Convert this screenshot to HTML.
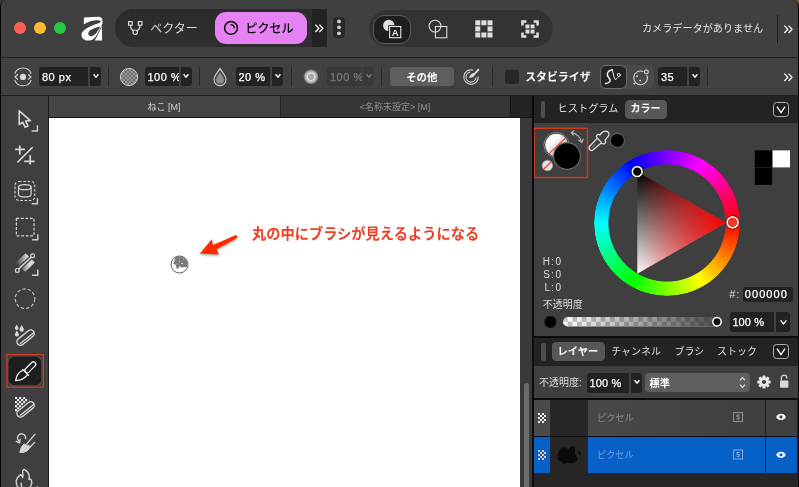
<!DOCTYPE html>
<html lang="ja">
<head>
<meta charset="utf-8">
<title>Affinity</title>
<style>
*{box-sizing:border-box;margin:0;padding:0}
html,body{width:799px;height:487px;overflow:hidden;background:linear-gradient(90deg,#43362a,#6e5a40)}
body{font-family:"Liberation Sans","Noto Sans CJK JP",sans-serif;color:#e4e4e4;font-size:11px;line-height:1}
#win{will-change:transform;position:absolute;left:0;top:0;width:799px;height:487px;background:#404040;border-radius:6px 6px 0 0;overflow:hidden}
.abs{position:absolute}
.t{position:absolute;white-space:nowrap;line-height:1}
.b{font-weight:bold}
.num{font-size:11px;letter-spacing:0.5px;-webkit-text-stroke:0.25px currentColor}
/* title bar */
#title{position:absolute;left:0;top:0;width:799px;height:57px;background:#404040}
.tl{position:absolute;top:22px;width:12px;height:12px;border-radius:50%}
#hl1{position:absolute;left:0;top:56.5px;width:799px;height:1.5px;background:#1f1f1f}
#ctx{position:absolute;left:0;top:58px;width:799px;height:37px;background:#414141}
#hl2{position:absolute;left:0;top:94.5px;width:799px;height:1.5px;background:#1f1f1f}
.fld{overflow:hidden;position:absolute;top:67px;height:19px;background:#222;border-radius:3px 0 0 3px;color:#fff;font-size:11px;letter-spacing:0.5px;-webkit-text-stroke:0.25px currentColor}
.fld span{position:absolute;left:3px;top:4.6px;white-space:nowrap}
.dd{position:absolute;top:67px;height:19px;width:11px;background:#222;border-radius:0 3px 3px 0}
.vsep{position:absolute;top:67px;height:19px;width:1px;background:#2a2a2a}
/* left tools */
#tools{position:absolute;left:0;top:96px;width:48px;height:391px;background:#3f3f3f}
#tabs{position:absolute;left:49px;top:96px;width:484px;height:22px;background:#232323}
#canvas{position:absolute;left:49px;top:117.9px;width:471.2px;height:370px;background:#fff}
#scroll{position:absolute;left:520.2px;top:118px;width:12px;height:369px;background:#393939}
#rp{position:absolute;left:532.1px;top:96px;width:267px;height:391px;background:#0c0c0c}
</style>
</head>
<body>
<div id="win">
<div id="title">
  <div class="tl" style="left:14px;background:#fe5f57"></div>
  <div class="tl" style="left:34px;background:#febc2e"></div>
  <div class="tl" style="left:54px;background:#28c840"></div>
  <svg class="abs" style="left:81px;top:15.5px" width="22" height="25" viewBox="120 114 238 266">
    <path fill="#fff" d="M152,128 L305,121 C345,120 360,150 350,195 L336,172 C310,146 225,158 150,203 Z"/>
    <path fill="#fff" d="M352,185 C342,240 300,330 250,362 C210,390 140,382 127,330 C115,285 170,250 225,224 C275,200 320,190 340,172 Z"/>
    <path fill="#404040" d="M329,225 C298,292 256,334 224,331 C190,326 192,290 220,267 C253,242 300,232 329,225 Z"/>
    <path fill="#fff" d="M347,212 L348,376 L268,376 Z"/>
    <path stroke="#404040" stroke-width="9" d="M340,232 L272,362" fill="none"/>
  </svg>
  <div class="abs" style="left:115px;top:9px;width:212px;height:38px;background:#232323;border-radius:19px 0 0 19px"></div>
  <div class="abs" style="left:115px;top:9px;width:197px;height:38px;background:linear-gradient(#2b2b2b,#2f2f2f);border-radius:19px 0 0 19px"></div>
  <svg class="abs" style="left:126px;top:19px" width="18" height="18" viewBox="0 0 18 18" fill="none" stroke="#d8d8d8" stroke-width="1.2">
    <rect x="2.6" y="2.6" width="3.6" height="3.6"/><rect x="12.3" y="2.6" width="3.6" height="3.6"/>
    <circle cx="9.2" cy="13.2" r="2.2"/>
    <path d="M4.4,6.2 C4.4,9.5 6,11 7.4,12 M14.1,6.2 C14.1,9.5 12.4,11 11,12"/>
  </svg>
  <div class="t" style="left:150.3px;top:23px;font-size:12px;color:#dcdcdc">ベクター</div>
  <div class="abs" style="left:215.2px;top:12.3px;width:91.8px;height:31.4px;background:#e682f4;border-radius:11px"></div>
  <svg class="abs" style="left:222px;top:19px" width="18" height="18" viewBox="0 0 18 18" fill="none" stroke="#111" stroke-width="1.5">
    <circle cx="9" cy="8.9" r="6.4"/>
    <path d="M8.4,5.6 C10.8,5.4 12.3,6.8 12.3,9.2" stroke-width="1.4"/>
  </svg>
  <div class="t" style="left:245.6px;top:22.9px;font-size:12px;color:#000;font-weight:500">ピクセル</div>
  <svg class="abs" style="left:314px;top:22.5px" width="11" height="11" viewBox="0 0 11 11" fill="none" stroke="#f4f4f4" stroke-width="1.35"><path d="M1.4,1.6 L4.8,5.3 L1.4,9 M5.4,1.6 L8.8,5.3 L5.4,9"/></svg>
  <div class="abs" style="left:333px;top:16.5px;width:12px;height:21.6px;background:#282828;border-radius:4px"></div>
  <svg class="abs" style="left:333px;top:16.1px" width="12" height="22" viewBox="0 0 12 22" fill="#d0d0d0"><circle cx="6" cy="5.4" r="1.9"/><circle cx="6" cy="11.3" r="1.9"/><circle cx="6" cy="17.3" r="1.9"/></svg>
  <div class="abs" style="left:369px;top:10px;width:184px;height:37px;background:#333;border-radius:18.5px"></div>
  <div class="abs" style="left:373px;top:14.5px;width:38px;height:29px;background:#1e1e1e;border:1px solid #5c5c5c;border-radius:11px"></div>
  <svg class="abs" style="left:380px;top:16px" width="26" height="26" viewBox="0 0 26 26">
    <circle cx="8.8" cy="9.5" r="5.7" fill="#dedede"/>
    <rect x="8.2" y="9.2" width="14" height="14" fill="#1e1e1e"/>
    <rect x="9.6" y="10.5" width="11.2" height="11.2" fill="#1e1e1e" stroke="#e4e4e4" stroke-width="1.1"/>
    <text x="15.2" y="20" font-family="Liberation Sans, sans-serif" font-weight="bold" font-size="9.5" fill="#e4e4e4" text-anchor="middle">A</text>
  </svg>
  <svg class="abs" style="left:425px;top:16px" width="26" height="26" viewBox="0 0 26 26" fill="none" stroke="#dcdcdc" stroke-width="1.1">
    <circle cx="10" cy="10.1" r="5.9"/><rect x="10.4" y="10.5" width="11.4" height="11.3"/>
  </svg>
  <svg class="abs" style="left:474.5px;top:19.8px" width="18" height="18" viewBox="0 0 18 18" fill="#dedede">
    <rect x="0.3" y="0.3" width="5" height="5"/><rect x="6.4" y="0.3" width="5" height="5"/><rect x="12.5" y="0.3" width="5" height="5"/>
    <rect x="0.3" y="6.4" width="5" height="5"/><rect x="12.5" y="6.4" width="5" height="5"/>
    <rect x="0.3" y="12.5" width="5" height="5"/><rect x="6.4" y="12.5" width="5" height="5"/><rect x="12.5" y="12.5" width="5" height="5"/>
  </svg>
  <svg class="abs" style="left:520.5px;top:19.8px" width="18" height="18" viewBox="0 0 18 18" fill="#dedede">
    <path d="M0.2,0.2 h5.2 v2.5 h-2.7 v2.7 h-2.5z M17.8,0.2 h-5.2 v2.5 h2.7 v2.7 h2.5z M0.2,17.8 h5.2 v-2.5 h-2.7 v-2.7 h-2.5z M17.8,17.8 h-5.2 v-2.5 h2.7 v-2.7 h2.5z"/>
    <rect x="4.5" y="4.5" width="3.9" height="3.9"/><rect x="9.6" y="4.5" width="3.9" height="3.9"/><rect x="4.5" y="9.6" width="3.9" height="3.9"/><rect x="9.6" y="9.6" width="3.9" height="3.9"/>
  </svg>
  <div class="t" style="left:642px;top:24px;font-size:10.15px;color:#e6e6e6">カメラデータがありません</div>
  <div class="abs" style="left:777px;top:15px;width:1px;height:28px;background:#1e1e1e"></div>
  <svg class="abs" style="left:783px;top:23.5px" width="11" height="11" viewBox="0 0 11 11" fill="none" stroke="#f4f4f4" stroke-width="1.35"><path d="M1.4,1.6 L4.8,5.3 L1.4,9 M5.6,1.6 L9,5.3 L5.6,9"/></svg>
</div>
<div id="hl1"></div>
<div id="ctx"></div>

  <svg class="abs" style="left:12px;top:66px" width="22" height="22" viewBox="0 0 22 22" fill="none" stroke="#d4d4d4" stroke-width="1.1">
    <path d="M2.7,7.9 A8.8,8.8 0 0 1 19.3,7.9 M2.7,13.9 A8.8,8.8 0 0 0 19.3,13.9"/>
    <path d="M5.9,8.2 L3.1,10.9 L5.9,13.7 M16.1,8.2 L18.9,10.9 L16.1,13.7" stroke-width="1.2"/>
    <circle cx="11" cy="10.9" r="3.1" fill="#d8d8d8" stroke="none"/>
  </svg>
<div class="fld" style="left:39px;width:49px"><span>80 px</span></div><div class="dd" style="left:90px"><svg class="abs" style="left:2.5px;top:6px" width="6" height="6" viewBox="0 0 6 6" fill="none" stroke="#fff" stroke-width="1.4"><path d="M0.6,1.2 L3,4.2 L5.4,1.2"/></svg></div>
  <div class="vsep" style="left:108px"></div>
  <svg class="abs" style="left:119px;top:67px" width="20" height="20" viewBox="0 0 20 20">
    <defs><pattern id="ck" width="4" height="4" patternUnits="userSpaceOnUse"><rect width="4" height="4" fill="#6a6a6a"/><rect width="2" height="2" fill="#9a9a9a"/><rect x="2" y="2" width="2" height="2" fill="#9a9a9a"/></pattern></defs>
    <circle cx="10" cy="10" r="8.6" fill="url(#ck)" stroke="#cfcfcf" stroke-width="1"/>
  </svg>
<div class="fld" style="left:144.5px;width:34.5px"><span>100 %</span></div><div class="dd" style="left:180.5px"><svg class="abs" style="left:2.5px;top:6px" width="6" height="6" viewBox="0 0 6 6" fill="none" stroke="#fff" stroke-width="1.4"><path d="M0.6,1.2 L3,4.2 L5.4,1.2"/></svg></div>
  <div class="vsep" style="left:199px"></div>
  <svg class="abs" style="left:212px;top:67px" width="16" height="20" viewBox="0 0 16 20">
    <path d="M8,1.6 C10.5,5.6 14,9 14,12.6 A6,6 0 0 1 2,12.6 C2,9 5.5,5.6 8,1.6 Z" fill="none" stroke="#d4d4d4" stroke-width="1.1"/>
    <path d="M8,5.2 C9.8,8 12,10.4 12,12.8 A4,4 0 0 1 4,12.8 C4,10.4 6.2,8 8,5.2 Z" fill="#8c8c8c"/>
  </svg>
<div class="fld" style="left:235.5px;width:34.5px"><span>20 %</span></div><div class="dd" style="left:272px"><svg class="abs" style="left:2.5px;top:6px" width="6" height="6" viewBox="0 0 6 6" fill="none" stroke="#fff" stroke-width="1.4"><path d="M0.6,1.2 L3,4.2 L5.4,1.2"/></svg></div>
  <div class="vsep" style="left:290.5px"></div>
  <svg class="abs" style="left:302px;top:68px" width="18" height="18" viewBox="0 0 18 18">
    <defs><radialGradient id="hg"><stop offset="0.36" stop-color="#a6a6a6"/><stop offset="0.44" stop-color="#e8e8e8"/><stop offset="0.54" stop-color="#d0d0d0"/><stop offset="0.8" stop-color="#9a9a9a"/><stop offset="1" stop-color="#6a6a6a" stop-opacity="0.3"/></radialGradient></defs>
    <circle cx="9" cy="8.8" r="7.8" fill="url(#hg)"/>
  </svg>
<div class="fld" style="left:327px;width:34.5px;background:#383838;color:#7a7a7a"><span>100 %</span></div><div class="dd" style="left:363px;background:#383838"><svg class="abs" style="left:2.5px;top:6px" width="6" height="6" viewBox="0 0 6 6" fill="none" stroke="#777" stroke-width="1.4"><path d="M0.6,1.2 L3,4.2 L5.4,1.2"/></svg></div>
  <div class="vsep" style="left:381px"></div>
  <div class="abs" style="left:390px;top:66.5px;width:64px;height:19px;background:#5e5e5e;border-radius:4px"></div>
  <div class="t b" style="left:406.2px;top:72.6px;font-size:10.4px;color:#fff">その他</div>
  <svg class="abs" style="left:461px;top:66px" width="20" height="20" viewBox="0 0 20 20" fill="none" stroke="#c4c4c4" stroke-width="1">
    <path d="M17.17,10.47 A7.2,7.2 0 1 1 11.86,4.15" stroke-width="1.15" stroke="#cdcdcd"/><path d="M14.98,11.54 A5,5 0 1 1 9.13,6.18" stroke-width="1.15" stroke="#cdcdcd"/>
    <path d="M14,7.4 L17.4,3.7" stroke="#dcdcdc" stroke-width="1.8" stroke-linecap="round"/>
    <path d="M7.9,11.8 C8.4,9.6 10.6,7.4 12.8,7 C13.6,7.2 14.2,7.8 14.3,8.6 C13.4,10.8 10.8,12 7.9,11.8 Z" fill="#dcdcdc" stroke="none"/>
  </svg>
  <div class="vsep" style="left:492px"></div>
  <div class="abs" style="left:505px;top:70px;width:14px;height:13.5px;background:#262626;border-radius:3px"></div>
  <div class="t b" style="left:525.2px;top:72px;font-size:10.9px;color:#fff">スタビライザ</div>
  <div class="abs" style="left:599.5px;top:65px;width:54px;height:24px;background:#4a4a4a;border-radius:6px"></div>
  <div class="abs" style="left:599.5px;top:65px;width:27px;height:24px;background:#242424;border:1px solid #6a6a6a;border-radius:6px"></div>
  <svg class="abs" style="left:603px;top:68px" width="20" height="18" viewBox="0 0 20 18" fill="none" stroke="#ececec" stroke-linecap="round" stroke-linejoin="round">
    <path d="M2.6,15.6 C5,15 7.4,13.6 7.1,12 C6.8,10 3.6,8.4 4.4,5.6 C5,3.4 7.6,2 9.4,1.7" stroke-width="1.5"/>
    <path d="M9.4,1.7 C10,5 11,9.6 12.3,11.6 C13.6,11 15,9.8 15.6,8.5" stroke-width="1"/><circle cx="15.8" cy="6.9" r="1.5" stroke-width="1"/>
  </svg>
  <svg class="abs" style="left:630px;top:67px" width="22" height="20" viewBox="0 0 22 20" fill="none" stroke="#d8d8d8" stroke-width="1.1">
    <path d="M16.8,7.9 A6.9,6.9 0 1 1 13.4,4.6"/><circle cx="16.4" cy="4.9" r="1.9"/>
    <g fill="#d8d8d8" stroke="none"><circle cx="7.1" cy="9.2" r="0.9"/><circle cx="10.2" cy="13.6" r="0.9"/><circle cx="4.3" cy="16.6" r="0.9"/></g>
  </svg>
<div class="fld" style="left:658px;width:29px"><span>35</span></div><div class="dd" style="left:689px"><svg class="abs" style="left:2.5px;top:6px" width="6" height="6" viewBox="0 0 6 6" fill="none" stroke="#fff" stroke-width="1.4"><path d="M0.6,1.2 L3,4.2 L5.4,1.2"/></svg></div>
  <div class="vsep" style="left:707px"></div>
  <svg class="abs" style="left:783px;top:71.5px" width="11" height="11" viewBox="0 0 11 11" fill="none" stroke="#f4f4f4" stroke-width="1.35"><path d="M1.4,1.6 L4.8,5.3 L1.4,9 M5.6,1.6 L9,5.3 L5.6,9"/></svg>
<div id="hl2"></div>
<div id="tools"></div>
<svg class="abs" style="left:0;top:96px" width="48" height="391" viewBox="0 96 48 391" fill="none" stroke="#d6d6d6" stroke-width="1.4" stroke-linejoin="round" stroke-linecap="round">
  <!-- move -->
  <path d="M19.2,110.8 L19.2,124.6 L22.7,122.2 L25.1,127.2 L27.9,125.9 L25.6,121 L30.4,120.6 Z" stroke-width="1.6"/>
  <path d="M32.199999999999996,131 H37.4 V125.8" stroke="#cfcfcf" stroke-width="1.4" fill="none"/>
  <!-- crop -->
  <g stroke-linecap="butt" stroke-width="1.8"><path d="M15.2,149.4 H25 M19.8,145.6 V154.8 M24.2,161.4 H34.6 M30.2,155.2 V164.6"/><path d="M17.4,162.4 L32.6,147.2" stroke-width="1.6"/></g>
  <!-- object select -->
  <rect x="15" y="181.4" width="19.8" height="19" rx="4" stroke-dasharray="2.6 1.7" stroke-linecap="butt" stroke-width="1.05"/>
  <g stroke-width="1.2"><ellipse cx="24.8" cy="187.2" rx="6.3" ry="2.5"/><path d="M18.5,187.2 V194.4 A6.3,2.5 0 0 0 31.1,194.4 V187.2"/></g>
  <path d="M32.199999999999996,203.8 H37.4 V198.60000000000002" stroke="#cfcfcf" stroke-width="1.4" fill="none"/>
  <!-- marquee -->
  <rect x="16.4" y="218.4" width="17.6" height="17.4" stroke-dasharray="2.8 1.7" stroke-linecap="butt" stroke-width="1.2"/>
  <path d="M32.599999999999994,239.8 H37.8 V234.60000000000002" stroke="#cfcfcf" stroke-width="1.4" fill="none"/>
  <!-- gradient -->
  <defs><linearGradient id="gt" x1="0" y1="0.2" x2="1" y2="0.8"><stop offset="0" stop-color="#e8e8e8" stop-opacity="0.1"/><stop offset="0.7" stop-color="#e8e8e8" stop-opacity="0.9"/></linearGradient></defs>
  <rect x="-6.8" y="-6.6" width="13.6" height="13.2" transform="translate(25.4 262.6) rotate(-44)" fill="url(#gt)" stroke="none"/>
  <path d="M18.6,269 L31.4,257" stroke-width="4" stroke="#3f3f3f"/><path d="M18.6,269 L31.4,257" stroke-width="1.6"/>
  <circle cx="17.3" cy="270.4" r="1.9" fill="#3f3f3f" stroke-width="1.2"/><circle cx="32.7" cy="255.7" r="1.9" fill="#3f3f3f" stroke-width="1.2"/>
  <path d="M32.599999999999994,275.2 H37.8 V270.0" stroke="#cfcfcf" stroke-width="1.4" fill="none"/>
  <!-- freehand -->
  <circle cx="25" cy="298.7" r="9.8" stroke-dasharray="3.4 2" stroke-linecap="butt" stroke-width="1.1" stroke="#c4c4c4"/>
  <!-- flood -->
  <g transform="translate(25.6 337.6) rotate(-39)" stroke-width="1.4"><rect x="-10.1" y="-3.6" width="20.2" height="7.2" rx="3.6"/><path d="M-7.8,1.3 H9"/></g>
  <g fill="#d8d8d8" stroke="none"><path d="M16.7,324.4 C17.689999999999998,326.10999999999996 18.5,327.18999999999994 18.5,328.17999999999995 A1.8,1.8 0 0 1 14.899999999999999,328.17999999999995 C14.899999999999999,327.18999999999994 15.709999999999999,326.10999999999996 16.7,324.4Z M21.7,325 C22.91,327.09 23.9,328.41 23.9,329.62 A2.2,2.2 0 0 1 19.5,329.62 C19.5,328.41 20.49,327.09 21.7,325Z M16.9,330.4 C18.0,332.29999999999995 18.9,333.49999999999994 18.9,334.59999999999997 A2.0,2.0 0 0 1 14.899999999999999,334.59999999999997 C14.899999999999999,333.49999999999994 15.799999999999999,332.29999999999995 16.9,330.4Z"/></g>
  <!-- paint brush selected -->
  <rect x="7.9" y="355.9" width="34" height="30" rx="7" fill="#1e1e1e" stroke="#555" stroke-width="1"/>
  <rect x="6.9" y="354.6" width="36.4" height="32.6" fill="none" stroke="#d63a22" stroke-width="1.2" stroke-linejoin="miter"/>
  <g stroke="#f0f0f0" stroke-width="1.3">
    <rect x="-6.6" y="-2.4" width="13.2" height="4.8" rx="2.2" transform="translate(30.3 367.3) rotate(-45)"/>
    <path d="M22.8,369.4 L28.6,375.2"/>
    <path d="M23.4,370.4 C19.6,371.2 16.6,374.8 15.6,380.7 C21.2,380.3 25.4,378.2 27.6,374.4"/>
  </g>
  <!-- erase -->
  <g fill="#f2f2f2" stroke="none"><rect x="15.00" y="397.00" width="2.03" height="2.03"/><rect x="19.06" y="397.00" width="2.03" height="2.03"/><rect x="23.12" y="397.00" width="2.03" height="2.03"/><rect x="17.03" y="399.03" width="2.03" height="2.03"/><rect x="21.09" y="399.03" width="2.03" height="2.03"/><rect x="25.15" y="399.03" width="2.03" height="2.03"/><rect x="15.00" y="401.06" width="2.03" height="2.03"/><rect x="19.06" y="401.06" width="2.03" height="2.03"/><rect x="23.12" y="401.06" width="2.03" height="2.03"/><rect x="17.03" y="403.09" width="2.03" height="2.03"/><rect x="21.09" y="403.09" width="2.03" height="2.03"/><rect x="15.00" y="405.12" width="2.03" height="2.03"/><rect x="19.06" y="405.12" width="2.03" height="2.03"/><rect x="17.03" y="407.15" width="2.03" height="2.03"/><rect x="15.00" y="409.18" width="2.03" height="2.03"/></g>
  <g transform="translate(25.6 409.4) rotate(-39)" stroke-width="1.4"><rect x="-10.1" y="-3.6" width="20.2" height="7.2" rx="3.6" fill="#3f3f3f"/><path d="M-7.8,1.3 H9"/></g>
  <!-- history brush -->
  <g stroke-width="1.3">
    <path d="M26.8,443.8 L35,434.2 M30.4,446.8 L34.6,442.4"/>
    <path d="M23.8,444.2 C21.6,446 20.4,449 19.9,452.6 C23.2,452.6 26.2,451.8 27.6,450.4 C29,449 29.8,447.8 30.3,446.7 Z" fill="#d6d6d6" stroke-width="1"/>
    <path d="M25.5,438.6 A4,4 0 1 0 19.4,441.2"/><path d="M16.2,441.4 L19.6,442.9 L20.2,439.2"/>
  </g>
  <!-- burn -->
  <path d="M24.05,469.3 C26.6,470.6 29.2,473.4 29.3,476.6 L29,479.6 C29.6,478.8 30.6,478.8 31.2,480 C31.9,481.4 32,483 31.4,484.6 C31,485.8 30.4,486.6 29.7,487.5 M24.05,469.3 C22.8,470 22.4,471.4 22.7,472.8 C23,474.4 23,476 22.6,477.5 C22.2,476.2 21.6,475.2 20.6,474.6 C18.6,476 16.8,478.2 16.3,480.6 C15.9,483.2 16.8,485.6 18.2,487.5 M21.1,483.2 L21.7,487.5" stroke-width="1.4"/>
  <path d="M36.6,487 L37.4,485.8 L38.2,487Z" fill="#d6d6d6" stroke="none"/>
</svg>

<div class="abs" style="left:48px;top:96px;width:1px;height:391px;background:#1c1c1c"></div>
<div id="tabs"></div>
<div class="abs" style="left:49px;top:96px;width:230.5px;height:21.5px;background:#454545"></div>
<div class="t" style="left:49px;width:230px;top:102.5px;font-size:9px;color:#d2d2d2;text-align:center">ねこ [M]</div>
<div class="abs" style="left:280.5px;top:96px;width:229.5px;height:21.5px;background:#363636"></div><div class="abs" style="left:510px;top:96px;width:1px;height:21.5px;background:#151515"></div><div class="abs" style="left:49px;top:117px;width:484px;height:1px;background:#151515"></div>
<div class="t" style="left:280px;width:230px;top:102.5px;font-size:9px;color:#8e8e8e;text-align:center">&lt;名称未設定&gt; [M]</div>

<div id="canvas"></div>
<div id="scroll"></div>
<div class="abs" style="left:523.8px;top:382.5px;width:5.6px;height:120px;background:#6c6c6c;border-radius:3px"></div>
<svg class="abs" style="left:49px;top:118px" width="471" height="369" viewBox="49 118 471 369">
  <defs><filter id="sh" x="-20%" y="-20%" width="140%" height="160%"><feGaussianBlur stdDeviation="0.8"/></filter>
  <radialGradient id="bc"><stop offset="0" stop-color="#6a6a6a"/><stop offset="0.6" stop-color="#9a9a9a"/><stop offset="1" stop-color="#e2e2e2"/></radialGradient></defs>
  <path d="M199.8,255 L211.9,240.8 L212.9,246.5 L235.9,236.7 L236.9,239.7 L216.7,250.8 L218.9,255.9 Z" fill="#555" opacity="0.5" filter="url(#sh)"/>
  <path d="M199.8,253.5 L211.9,239.3 L212.9,245 L235.4,235.3 A1.6,1.6 0 0 1 236.6,238.3 L216.7,249.3 L218.9,254.4 Z" fill="#ff2a00"/>
  <defs><clipPath id="bcl"><circle cx="179.5" cy="264.5" r="8.3"/></clipPath><filter id="bb" x="-20%" y="-20%" width="140%" height="140%"><feGaussianBlur stdDeviation="0.35"/></filter></defs>
  <circle cx="179.5" cy="264.5" r="8.5" fill="#fff" stroke="#5a5a5a" stroke-width="1"/>
  <g clip-path="url(#bcl)" filter="url(#bb)"><path d="M174.70,257.65 L178.81,256.00 L183.94,256.72 L187.64,261.24 L186.92,266.89 L180.86,267.50 L179.83,265.76 L178.04,269.04 L176.50,268.53 L175.83,264.83 L173.06,263.91 L174.70,260.21Z" fill="#7a7a7a"/>
  <circle cx="179.32" cy="261.34" r="0.6" fill="#e8e8e8"/><rect x="181.12" y="263.04" width="2" height="1" fill="#d8d8d8"/>
  <circle cx="183.43" cy="258.93" r="0.5" fill="#bbb"/><circle cx="177.52" cy="264.06" r="0.5" fill="#ccc"/></g>
</svg>
<div class="t" style="left:251.9px;top:226.9px;font-size:14.25px;font-weight:bold;color:#f03c22">丸の中にブラシが見えるようになる</div>

<div id="rp"></div>
<div class="abs" style="left:533.5px;top:96px;width:265.5px;height:27px;background:#232323"></div>
<div class="abs" style="left:533.5px;top:123px;width:265.5px;height:213px;background:#3f3f3f"></div>
<div class="abs" style="left:541px;top:100.5px;width:4.4px;height:17.6px;background:#4e4e4e;border-radius:2.2px"></div>
<div class="t" style="left:557.6px;top:104px;font-size:10.2px;color:#dedede">ヒストグラム</div>
<div class="abs" style="left:624.5px;top:100px;width:42.5px;height:18.6px;background:#575757;border-radius:4.5px"></div>
<div class="t b" style="left:630.5px;top:104.1px;font-size:10px;color:#fff">カラー</div>
<div class="abs" style="left:772.8px;top:101.8px;width:16.4px;height:15.4px;border:1px solid #b0b0b0;border-radius:3.5px;background:#1f1f1f"></div><svg class="abs" style="left:772.8px;top:101.8px" width="16" height="15" viewBox="0 0 16 15" fill="none" stroke="#fff" stroke-width="1.4"><path d="M4,4.6 L8,10.6 L12,4.6"/></svg>
<div class="abs" style="left:593.8px;top:149.8px;width:145.8px;height:145.8px;border-radius:50%;background:conic-gradient(from 90deg,#f00,#ff0,#0f0,#0ff,#00f,#f0f,#f00);-webkit-mask:radial-gradient(circle,transparent 58.2px,#000 59px,#000 72.4px,transparent 73.2px);mask:radial-gradient(circle,transparent 58.2px,#000 59px,#000 72.4px,transparent 73.2px)"></div>
<svg class="abs" style="left:534px;top:123px" width="265" height="213" viewBox="534 123 265 213">
  <defs>
    <linearGradient id="wg" x1="0" y1="0" x2="1" y2="1"><stop offset="0.3" stop-color="#fff"/><stop offset="0.75" stop-color="#c0c0c0"/></linearGradient>
    <linearGradient id="tg1" gradientUnits="userSpaceOnUse" x1="637.3" y1="222.7" x2="725.6" y2="222.7"><stop offset="0" stop-color="#f00" stop-opacity="0"/><stop offset="1" stop-color="#f00" stop-opacity="1"/></linearGradient>
    <linearGradient id="tg0" gradientUnits="userSpaceOnUse" x1="637.3" y1="172" x2="637.3" y2="273.5"><stop offset="0" stop-color="#000"/><stop offset="1" stop-color="#fff"/></linearGradient>
    <pattern id="ck3" width="9.4" height="9.4" patternUnits="userSpaceOnUse" x="563" y="317"><rect width="9.4" height="9.4" fill="#fff"/><rect width="4.7" height="4.7" fill="#c4c4c4"/><rect x="4.7" y="4.7" width="4.7" height="4.7" fill="#c4c4c4"/></pattern>
    <linearGradient id="og" gradientUnits="userSpaceOnUse" x1="563" y1="0" x2="721" y2="0"><stop offset="0" stop-color="#2a2a2a" stop-opacity="0"/><stop offset="1" stop-color="#2a2a2a" stop-opacity="0.85"/></linearGradient>
  </defs>
  <rect x="534.2" y="128.2" width="53.3" height="49.3" rx="0.8" fill="none" stroke="#cc3a1e" stroke-width="1.4"/>
  <circle cx="556.5" cy="145" r="12.6" fill="#3a3a3a" stroke="#858585" stroke-width="1"/><circle cx="556.5" cy="145" r="11.2" fill="url(#wg)"/>
  <path d="M548.9,153.9 L565.6,137.8" stroke="#ee4a3c" stroke-width="1.2"/>
  <circle cx="567" cy="156" r="13.4" fill="#000" stroke="#707070" stroke-width="1.1"/>
  <circle cx="547.4" cy="165.5" r="5.3" fill="#e2e2e2" stroke="#9a9a9a" stroke-width="0.6"/>
  <path d="M543.8,169 L551,162" stroke="#e8483a" stroke-width="1.2"/>
  <path d="M571.6,132.6 C576.6,133.6 580.6,137.4 581.6,141.8" fill="none" stroke="#b4b4b4" stroke-width="1.2"/>
  <path d="M574.4,130.6 L571.2,132.6 L573.6,135.4 M578.4,140 L581.8,142.4 L583.4,138.8" fill="none" stroke="#b4b4b4" stroke-width="1.2"/>
  <g fill="none" stroke="#e0e0e0" stroke-width="1.25" stroke-linejoin="round">
    <path d="M596.5,139.1 L589.9,146 C588.9,147.2 588.9,148.8 589.9,149.8 C590.9,150.8 592.2,150.8 593.2,149.8 L601.3,142.9 C602.4,143.8 603.6,144.2 604.6,143.6 C605.8,143 606.2,141.6 605,140 C605.8,139.4 606.4,138.6 607,137.8 C608.4,136.4 609.4,135.4 609,133.8 C608.6,132.2 606.6,131 604.7,131.1 C603.4,131.3 602.4,132.2 601.6,133 C600.9,133.8 600.3,134.4 599.8,134.9 C598.8,134.2 597.7,134.3 597,135.2 C596.2,136.2 596.4,137.2 597.2,137.9 Z"/>
    <path d="M597.4,138.2 L601.6,142.6"/>
    <path d="M591.9,147.7 L595.5,144.4" stroke-width="0.9" stroke-dasharray="0.8 0.7"/>
  </g>
  <circle cx="617.3" cy="140.4" r="7.1" fill="#000" stroke="#5c5c5c" stroke-width="1.2"/>
  <rect x="754.8" y="150.4" width="17.4" height="17" fill="#000"/><rect x="772.6" y="150.4" width="17.4" height="17" fill="#fff"/><rect x="754.8" y="167.8" width="17.4" height="17" fill="#000"/>
  <path d="M725.6,222.7 L637.3,171.8 L637.3,273.7 Z" fill="url(#tg0)"/>
  <path d="M725.6,222.7 L637.3,171.8 L637.3,273.7 Z" fill="url(#tg1)"/>
  <circle cx="732.6" cy="222.4" r="5.6" fill="#f23a2a" stroke="#fff" stroke-width="1.6"/>
  <circle cx="732.6" cy="222.4" r="6.8" fill="none" stroke="#222" stroke-width="0.8"/>
  <circle cx="637.2" cy="171.6" r="5" fill="#000" stroke="#fff" stroke-width="1.7"/>
  <circle cx="637.2" cy="171.6" r="6.2" fill="none" stroke="#222" stroke-width="0.8"/>
  <circle cx="550.4" cy="321.9" r="6" fill="#000" stroke="#2a2a2a" stroke-width="0.6"/>
  <rect x="563" y="317" width="158" height="9.4" rx="4.7" fill="url(#ck3)"/>
  <rect x="563" y="317" width="158" height="9.4" rx="4.7" fill="url(#og)"/>
  <circle cx="717" cy="321.7" r="4.2" fill="#111" stroke="#fff" stroke-width="1.5"/>
</svg>
<div class="t" style="left:530px;width:24.6px;text-align:right;top:256.9px;font-size:10px;letter-spacing:0.9px;color:#dcdcdc">H:</div><div class="t" style="left:555.6px;top:256.9px;font-size:10px;color:#dcdcdc">0</div>
<div class="t" style="left:530px;width:24.6px;text-align:right;top:269.8px;font-size:10px;letter-spacing:0.9px;color:#dcdcdc">S:</div><div class="t" style="left:555.6px;top:269.8px;font-size:10px;color:#dcdcdc">0</div>
<div class="t" style="left:530px;width:24.6px;text-align:right;top:282.7px;font-size:10px;letter-spacing:0.9px;color:#dcdcdc">L:</div><div class="t" style="left:555.6px;top:282.7px;font-size:10px;color:#dcdcdc">0</div>
<div class="t" style="left:542.8px;top:300.4px;font-size:10px;color:#dcdcdc">不透明度</div>
<div class="t" style="left:729.3px;top:289.3px;font-size:11px;letter-spacing:0.8px;color:#dcdcdc">#:</div>
<div class="abs" style="left:743px;top:286.6px;width:49.7px;height:15px;background:#222;border-radius:3px"></div>
<div class="t num" style="left:744.8px;top:288.6px;letter-spacing:1.05px;color:#fff">000000</div>
<div class="abs" style="left:730px;top:312px;width:44px;height:19.5px;background:#222;border-radius:3px 0 0 3px"></div>
<div class="t num" style="left:732.4px;top:316.6px;letter-spacing:0.1px;color:#fff">100 %</div>
<div class="abs" style="left:776px;top:312px;width:14px;height:19.5px;background:#222;border-radius:0 3px 3px 0"><svg class="abs" style="left:3.5px;top:6.5px" width="7" height="7" viewBox="0 0 7 7" fill="none" stroke="#fff" stroke-width="1.4"><path d="M0.6,1.4 L3.5,5 L6.4,1.4"/></svg></div>

<div class="abs" style="left:533.5px;top:338px;width:265.5px;height:28px;background:#232323"></div>
<div class="abs" style="left:541.4px;top:343px;width:4.4px;height:17.6px;background:#4e4e4e;border-radius:2.2px"></div>
<div class="abs" style="left:552px;top:342.3px;width:53px;height:18.4px;background:#575757;border-radius:4.5px"></div>
<div class="t b" style="left:557.4px;top:346.9px;font-size:10.3px;color:#fff">レイヤー</div>
<div class="t" style="left:611.2px;top:346.7px;font-size:10px;color:#dedede">チャンネル</div>
<div class="t" style="left:674.5px;top:346.7px;font-size:10px;color:#dedede">ブラシ</div>
<div class="t" style="left:717px;top:346.7px;font-size:10px;color:#dedede">ストック</div>
<div class="abs" style="left:772.6px;top:343.8px;width:16.4px;height:15.4px;border:1px solid #b0b0b0;border-radius:3.5px;background:#1f1f1f"></div><svg class="abs" style="left:772.6px;top:343.8px" width="16" height="15" viewBox="0 0 16 15" fill="none" stroke="#fff" stroke-width="1.4"><path d="M4,4.6 L8,10.6 L12,4.6"/></svg>
<div class="abs" style="left:533.5px;top:366px;width:265.5px;height:31.5px;background:#3f3f3f"></div>
<div class="t" style="left:539px;top:378.3px;font-size:10px;color:#dcdcdc">不透明度:</div>
<div class="abs" style="left:587px;top:373px;width:42px;height:19.5px;background:#222;border-radius:3px 0 0 3px"></div>
<div class="t num" style="left:589.6px;top:377.8px;letter-spacing:0.1px;color:#fff">100 %</div>
<div class="abs" style="left:631px;top:373px;width:11px;height:19.5px;background:#222;border-radius:0 3px 3px 0"><svg class="abs" style="left:2.5px;top:6px" width="6" height="6" viewBox="0 0 6 6" fill="none" stroke="#fff" stroke-width="1.4"><path d="M0.6,1.2 L3,4.2 L5.4,1.2"/></svg></div>
<div class="abs" style="left:645.3px;top:372.6px;width:105px;height:19.8px;background:#5e5e5e;border-radius:4px"></div>
<div class="t b" style="left:649.6px;top:378.9px;font-size:10.2px;color:#fff">標準</div>
<svg class="abs" style="left:738px;top:375px" width="9" height="15" viewBox="0 0 9 15" fill="none" stroke="#e0e0e0" stroke-width="1.2"><path d="M2,5.4 L4.5,2.6 L7,5.4 M2,9.6 L4.5,12.4 L7,9.6"/></svg>
<svg class="abs" style="left:756px;top:374.4px" width="16" height="16" viewBox="-8 -8 16 16">
  <g fill="#e6e6e6"><circle r="4.7"/>
  <g id="teeth"><rect x="-1.5" y="-6.6" width="3" height="13.2" rx="0.5"/><rect x="-1.5" y="-6.6" width="3" height="13.2" rx="0.5" transform="rotate(45)"/><rect x="-1.5" y="-6.6" width="3" height="13.2" rx="0.5" transform="rotate(90)"/><rect x="-1.5" y="-6.6" width="3" height="13.2" rx="0.5" transform="rotate(135)"/></g></g>
  <circle r="2.1" fill="#3f3f3f"/>
</svg>
<svg class="abs" style="left:778px;top:373px" width="12" height="16" viewBox="0 0 12 16"><path d="M3.4,7.6 V4.8 A2.7,2.7 0 0 1 8.8,4.8 V5.6" fill="none" stroke="#d8d8d8" stroke-width="1.3"/><rect x="2" y="7.4" width="8.4" height="7.4" rx="0.8" fill="#d8d8d8"/></svg>

<div class="abs" style="left:533.5px;top:399.5px;width:265.5px;height:36px;background:linear-gradient(90deg,#4a4a4a 10%,#404040 80%)"></div>
<div class="abs" style="left:533.5px;top:437px;width:265.5px;height:36px;background:#0660c8"></div>
<div class="abs" style="left:533.5px;top:473px;width:265.5px;height:14px;background:#262626"></div>
<div class="abs" style="left:550.2px;top:399.5px;width:37.4px;height:36px;background:#272727"></div>
<div class="abs" style="left:550.2px;top:437px;width:37.4px;height:36px;background:#272727"></div>
<div class="abs" style="left:764.8px;top:399.5px;width:1.2px;height:73.5px;background:#1c1c1c"></div><div class="abs" style="left:797px;top:399.5px;width:2px;height:73.5px;background:#1e1e1e"></div>
<svg class="abs" style="left:534px;top:399px" width="265" height="75" viewBox="534 399 265 75">
  <defs><pattern id="ck4" width="3.4" height="3.4" patternUnits="userSpaceOnUse" x="537.6" y="413"><rect width="1.7" height="1.7" fill="#eee"/><rect x="1.7" y="1.7" width="1.7" height="1.7" fill="#eee"/></pattern>
  <pattern id="ck5" width="3.4" height="3.4" patternUnits="userSpaceOnUse" x="537.6" y="450.4"><rect width="1.7" height="1.7" fill="#e6d2a8"/><rect x="1.7" y="1.7" width="1.7" height="1.7" fill="#e6d2a8"/></pattern></defs>
  <g fill="#ececec"><rect x="538" y="413" width="2" height="2"/><rect x="542" y="413" width="2" height="2"/><rect x="540" y="415" width="2" height="2"/><rect x="544" y="415" width="2" height="2"/><rect x="538" y="417" width="2" height="2"/><rect x="542" y="417" width="2" height="2"/><rect x="540" y="419" width="2" height="2"/><rect x="544" y="419" width="2" height="2"/><rect x="538" y="421" width="2" height="2"/><rect x="542" y="421" width="2" height="2"/></g>
  <g fill="#e2c8a2"><rect x="538" y="450" width="2" height="2"/><rect x="542" y="450" width="2" height="2"/><rect x="540" y="452" width="2" height="2"/><rect x="544" y="452" width="2" height="2"/><rect x="538" y="454" width="2" height="2"/><rect x="542" y="454" width="2" height="2"/><rect x="540" y="456" width="2" height="2"/><rect x="544" y="456" width="2" height="2"/><rect x="538" y="458" width="2" height="2"/><rect x="542" y="458" width="2" height="2"/></g>
  <path d="M558.0,456.0 L561.0,448.5 L565.0,448.0 L568.5,450.0 L572.0,446.5 L574.0,447.0 L574.5,453.5 L577.0,460.0 L573.5,462.5 L567.0,462.2 L564.0,463.5 L561.5,461.0 L558.5,459.5Z" fill="#0b0b0b" stroke="#0b0b0b" stroke-width="1.2" stroke-linejoin="round"/><path d="M578.6,451 L580.4,454.6 L579.2,454.8Z" fill="#0b0b0b" stroke="#0b0b0b" stroke-width="0.6"/>
  <g fill="none" stroke="#9a9a9a" stroke-width="0.9"><rect x="733.6" y="412.6" width="9" height="9"/><rect x="733.6" y="450" width="9" height="9" stroke="#8fb0dc"/></g>
  <path d="M739.6,415 h-2.6 v2 h2.2 v2 h-2.6" fill="none" stroke="#9a9a9a" stroke-width="1"/>
  <path d="M739.6,452.4 h-2.6 v2 h2.2 v2 h-2.6" fill="none" stroke="#8fb0dc" stroke-width="1"/>
  <path d="M776.2,416.9 C778,412.7 784,412.7 785.8,416.9 C784,421.09999999999997 778,421.09999999999997 776.2,416.9Z" fill="#fff"/><circle cx="781" cy="416.9" r="1.6" fill="#404040"/><path d="M776.2,454.8 C778,450.6 784,450.6 785.8,454.8 C784,459.0 778,459.0 776.2,454.8Z" fill="#fff"/><circle cx="781" cy="454.8" r="1.6" fill="#0660c8"/>
</svg>
<div class="t" style="left:597px;top:414.3px;font-size:9.2px;color:#8a8a8a">ピクセル</div>
<div class="t" style="left:597px;top:451.2px;font-size:9.2px;color:#6d9ee0">ピクセル</div>

<div class="abs" style="left:0;top:0;width:799px;height:500px;border-left:1px solid #060606;border-right:1.3px solid #060606;border-radius:6px 6px 0 0"></div>
</div>
</body>
</html>
